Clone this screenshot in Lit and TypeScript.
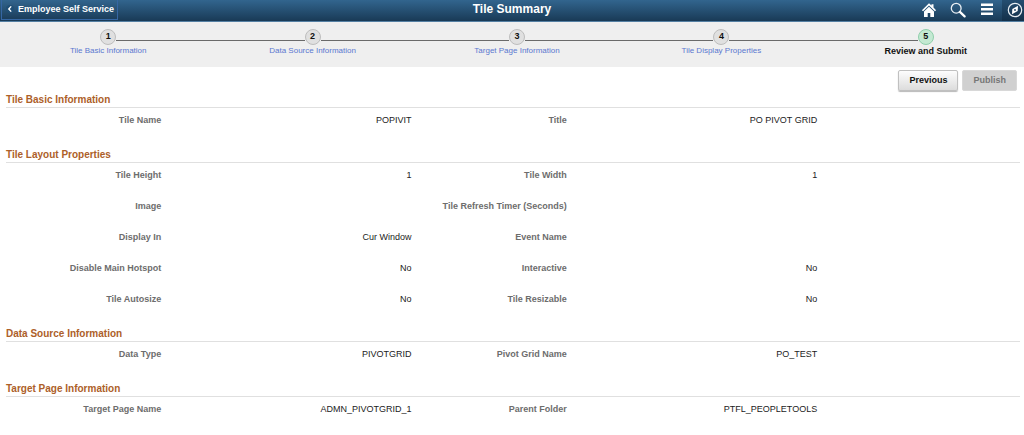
import { LitElement, html, css, svg } from "lit";
import { customElement, property } from "lit/decorators.js";
import { classMap } from "lit/directives/class-map.js";

type Field = [label: string, value: string];
interface Section {
  title: string;
  fields: Field[];
}

const STEPS = [
  "Tile Basic Information",
  "Data Source Information",
  "Target Page Information",
  "Tile Display Properties",
  "Review and Submit",
];

const SECTIONS: Section[] = [
  {
    title: "Tile Basic Information",
    fields: [
      ["Tile Name", "POPIVIT"],
      ["Title", "PO PIVOT GRID"],
    ],
  },
  {
    title: "Tile Layout Properties",
    fields: [
      ["Tile Height", "1"],
      ["Tile Width", "1"],
      ["Image", ""],
      ["Tile Refresh Timer (Seconds)", ""],
      ["Display In", "Cur Window"],
      ["Event Name", ""],
      ["Disable Main Hotspot", "No"],
      ["Interactive", "No"],
      ["Tile Autosize", "No"],
      ["Tile Resizable", "No"],
    ],
  },
  {
    title: "Data Source Information",
    fields: [
      ["Data Type", "PIVOTGRID"],
      ["Pivot Grid Name", "PO_TEST"],
    ],
  },
  {
    title: "Target Page Information",
    fields: [
      ["Target Page Name", "ADMN_PIVOTGRID_1"],
      ["Parent Folder", "PTFL_PEOPLETOOLS"],
    ],
  },
];

const homeIcon = svg`
  <path d="M8 1.2 0.9 8.2l1.2 1.1L8 3.6l5.9 5.7 1.2-1.1-2.6-2.6V2.2h-2v1.4z" fill="#fff"/>
  <path d="M8 4.8 3 9.6V15h3.7v-4h2.6v4H13V9.6z" fill="#fff"/>`;

const searchIcon = svg`
  <circle cx="6.2" cy="6.2" r="4.9" fill="none" stroke="#e8eef3" stroke-width="1.3"/>
  <path d="M9.9 9.9 14.6 14.4" stroke="#fff" stroke-width="2.2" stroke-linecap="round"/>`;

const menuIcon = svg`
  <path d="M2 1.4h12v2.6H2zM2 5.9h12v2.6H2zM2 10.4h12v2.6H2z" fill="#fff"/>`;

const compassIcon = svg`
  <circle cx="8" cy="8" r="6.7" fill="none" stroke="#e8eef3" stroke-width="1.2"/>
  <path d="M11 3.8 10.7 9.1 5 12.2 5.3 6.9z" fill="#fff"/>
  <circle cx="8" cy="8" r="0.9" fill="#1d3f5b"/>`;

@customElement("app-header")
class AppHeader extends LitElement {
  static styles = css`
    :host {
      display: block;
    }
    .bar {
      display: grid;
      grid-template-columns: 1fr auto 1fr;
      height: 21px;
      background: linear-gradient(#32658e, #193a56);
      border-bottom: 1px solid #5580a3;
      color: #fff;
    }
    .back {
      justify-self: start;
      display: flex;
      align-items: center;
      gap: 4px;
      height: 20px;
      margin-left: 1px;
      padding: 0 3px 2px 4px;
      border: 1px solid #3566a3;
      border-top: 0;
      background: transparent;
      color: #fff;
      font: bold 9px/12px "Liberation Sans", Arial, sans-serif;
      cursor: pointer;
    }
    .chevron {
      display: block;
      width: 8px;
      height: 8px;
    }
    .title {
      margin: 0;
      font: bold 12px/18px "Liberation Sans", Arial, sans-serif;
    }
    .tools {
      justify-self: end;
      display: flex;
      overflow: hidden;
    }
    .tool {
      display: flex;
      justify-content: center;
      width: 29px;
      height: 21px;
      padding: 2px 0 0;
      border: 0;
      background: transparent;
      cursor: pointer;
    }
    .nav {
      width: 22px;
      margin-left: 1px;
      padding-left: 4px;
      background: rgba(8, 28, 48, 0.3);
    }
    .icon {
      flex: none;
      display: block;
      width: 16px;
      height: 16px;
    }
  `;

  tool(label: string, icon: unknown, nav = false) {
    return html`<button class=${classMap({ tool: true, nav })} aria-label=${label}>
      <svg class="icon" viewBox="0 0 16 16" aria-hidden="true">${icon}</svg>
    </button>`;
  }

  render() {
    return html`<header class="bar">
      <button class="back">
        <svg class="chevron" viewBox="0 0 8 8" aria-hidden="true">
          <circle cx="4" cy="4" r="4" fill="#1f4f76" />
          <path d="M5.2 1.4 2.8 4l2.4 2.6" fill="none" stroke="#fff" stroke-width="1.4" />
        </svg>
        Employee Self Service
      </button>
      <h1 class="title">Tile Summary</h1>
      <div class="tools">
        ${this.tool("Home", homeIcon)} ${this.tool("Search", searchIcon)}
        ${this.tool("Actions", menuIcon)} ${this.tool("Navigator", compassIcon, true)}
      </div>
    </header>`;
  }
}

@customElement("step-train")
class StepTrain extends LitElement {
  @property({ type: Number }) current = 5;

  static styles = css`
    :host {
      display: block;
      overflow: hidden;
      background: #efefef;
    }
    .train {
      display: flex;
      margin: 0 -4px 0 6px;
      padding: 7px 0 10px;
      list-style: none;
    }
    .step {
      flex: 1 1 0;
      display: grid;
      grid-template-columns: 1fr auto 1fr;
      align-content: start;
      min-height: 28px;
    }
    .line {
      height: 1px;
      margin-top: 11px;
      background: #6a6a6a;
    }
    .step:first-child .before,
    .step:last-child .after {
      background: transparent;
    }
    .dot {
      box-sizing: border-box;
      width: 16px;
      height: 16px;
      border: 1px solid #bdbdbd;
      border-radius: 50%;
      background: #e0e0e0;
      color: #111;
      font: bold 9px/12px "Liberation Sans", Arial, sans-serif;
      text-align: center;
    }
    .label {
      grid-column: 1 / -1;
      justify-self: center;
      color: #5b78cf;
      font: 8px/12px "Liberation Sans", Arial, sans-serif;
      text-decoration: none;
      white-space: nowrap;
    }
    .current .dot {
      border-color: #8fcfab;
      background: #c3e9d2;
    }
    .current .label {
      color: #111;
      font: bold 9px/12px "Liberation Sans", Arial, sans-serif;
    }
  `;

  render() {
    return html`<ol class="train">
      ${STEPS.map((name, i) => {
        const current = i + 1 === this.current;
        return html`<li class=${classMap({ step: true, current })}>
          <span class="line before"></span><span class="dot">${i + 1}</span
          ><span class="line after"></span>
          ${current
            ? html`<span class="label" aria-current="step">${name}</span>`
            : html`<a class="label" href="#step-${i + 1}">${name}</a>`}
        </li>`;
      })}
    </ol>`;
  }
}

@customElement("field-section")
class FieldSection extends LitElement {
  @property({ attribute: false }) section!: Section;

  static styles = css`
    :host {
      display: block;
      font: 9px/12px "Liberation Sans", Arial, sans-serif;
    }
    .heading {
      margin: 0;
      border-bottom: 1px solid #e0e0e0;
      color: #ad6029;
      font: bold 10px/14px "Liberation Sans", Arial, sans-serif;
    }
    .fields {
      display: grid;
      grid-template-columns: 155fr 250fr 155fr 250fr;
      grid-auto-rows: minmax(31px, auto);
      width: 80%;
      margin: 0;
    }
    .name,
    .value {
      margin: 0;
      padding-top: 6px;
      text-align: right;
    }
    .name {
      color: #6d6d6d;
      font-weight: bold;
      white-space: nowrap;
      justify-self: end;
    }
    .value {
      color: #222;
    }
  `;

  render() {
    return html`<section>
      <h2 class="heading">${this.section.title}</h2>
      <dl class="fields">
        ${this.section.fields.map(
          ([name, value]) => html`<dt class="name">${name}</dt>
            <dd class="value">${value}</dd>`
        )}
      </dl>
    </section>`;
  }
}

@customElement("app-root")
class AppRoot extends LitElement {
  static styles = css`
    :host {
      display: block;
      background: #fff;
    }
    .actions {
      display: flex;
      justify-content: flex-end;
      gap: 4px;
      padding: 3px 7px 2px;
    }
    .button {
      box-sizing: border-box;
      height: 21px;
      padding: 0 10px 1px;
      border: 1px solid #c0c0c0;
      border-radius: 2px;
      background: linear-gradient(#fdfdfd, #dcdcdc);
      box-shadow: 0 1px 1px #b8b8b8;
      color: #111;
      font: bold 9px/12px "Liberation Sans", Arial, sans-serif;
      cursor: pointer;
    }
    .button:disabled {
      border-color: #d8d8d8;
      background: #d0d0d0;
      box-shadow: none;
      color: #777;
      cursor: default;
    }
    .content {
      display: grid;
      gap: 9px;
      padding: 0 4px 9px 6px;
    }
  `;

  render() {
    return html`<app-header></app-header>
      <step-train .current=${5}></step-train>
      <main>
        <div class="actions">
          <button class="button">Previous</button>
          <button class="button" disabled>Publish</button>
        </div>
        <div class="content">
          ${SECTIONS.map((s) => html`<field-section .section=${s}></field-section>`)}
        </div>
      </main>`;
  }
}
